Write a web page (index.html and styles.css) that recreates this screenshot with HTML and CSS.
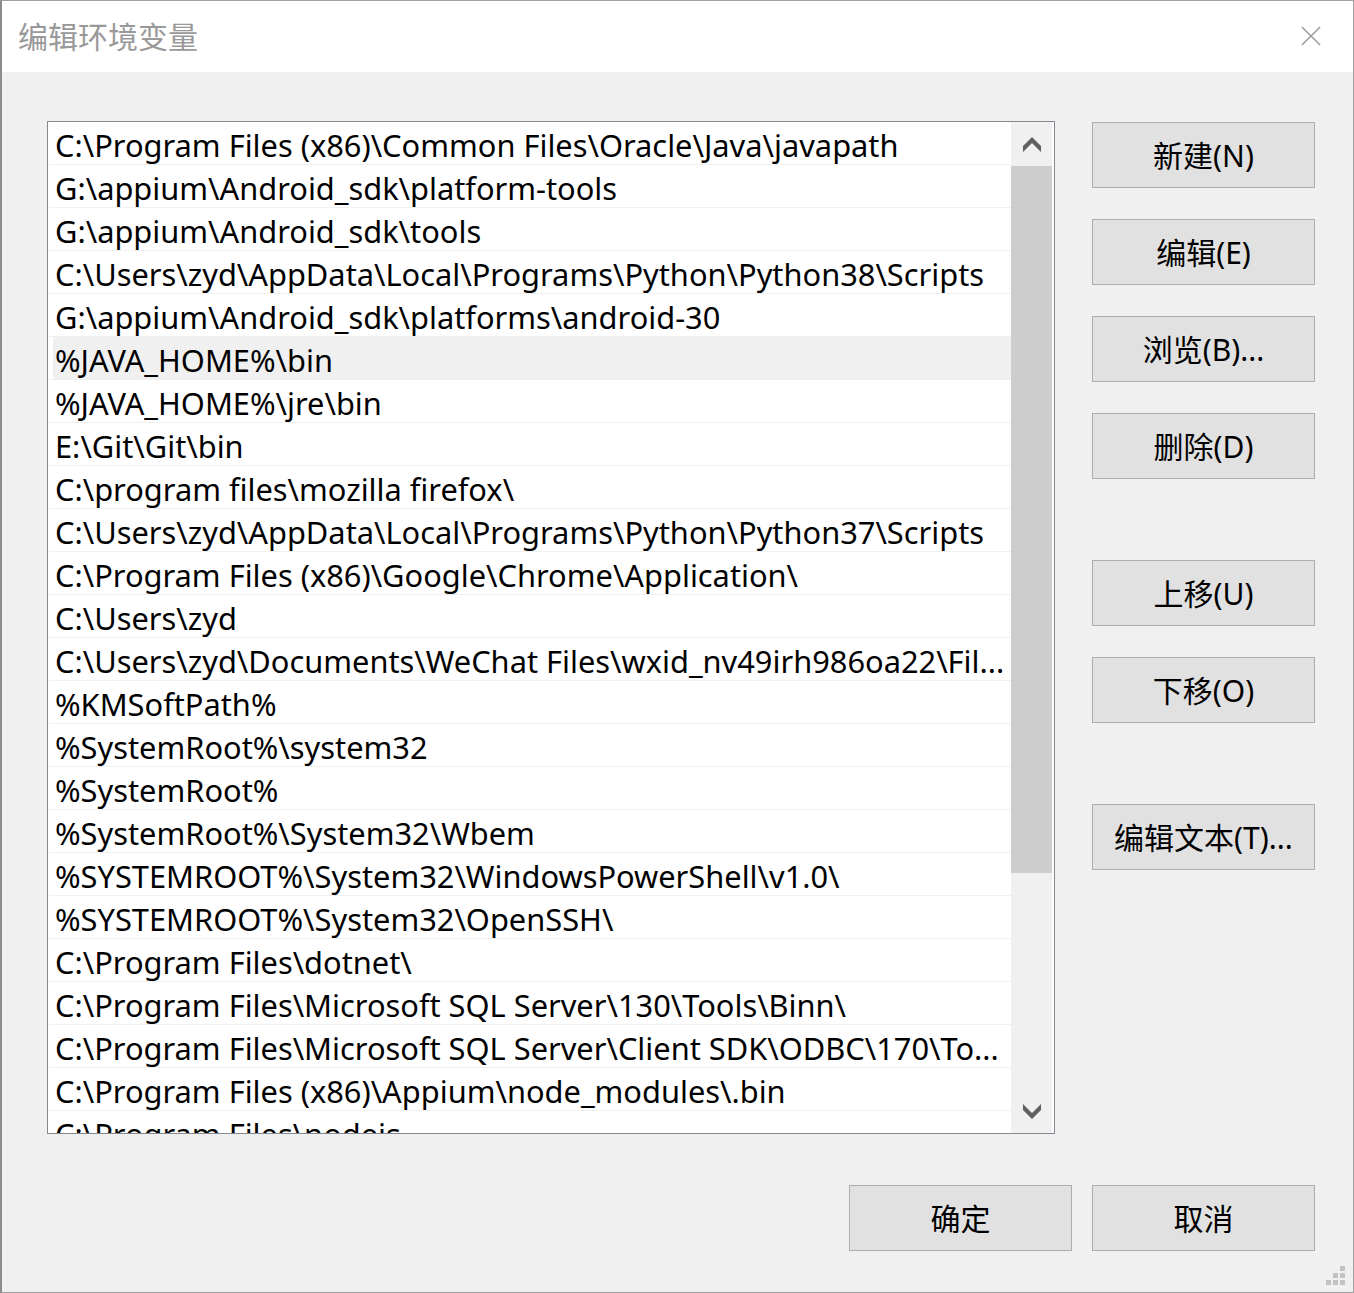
FILE: index.html
```html
<!doctype html>
<html lang="zh-CN">
<head>
	<meta charset="UTF-8">
	<title>编辑环境变量</title>
	<link rel="stylesheet" href="styles.css">
</head>
<body>
	<div class="win">
		<div class="titlebar">
			<span class="title">编辑环境变量</span>
			<svg class="close" width="22" height="22" viewBox="0 0 22 22">
				<path d="M1 1L21 21M21 1L1 21" stroke="#999" stroke-width="1.6" fill="none"/>
			</svg>
		</div>
		<div class="body">
			<div class="main">
				<div class="listbox">
					<div class="rows">
						<div class="row"><span>C:\Program Files (x86)\Common Files\Oracle\Java\javapath</span></div>
						<div class="row"><span>G:\appium\Android_sdk\platform-tools</span></div>
						<div class="row"><span>G:\appium\Android_sdk\tools</span></div>
						<div class="row"><span>C:\Users\zyd\AppData\Local\Programs\Python\Python38\Scripts</span></div>
						<div class="row"><span>G:\appium\Android_sdk\platforms\android-30</span></div>
						<div class="row sel"><span>%JAVA_HOME%\bin</span></div>
						<div class="row"><span>%JAVA_HOME%\jre\bin</span></div>
						<div class="row"><span>E:\Git\Git\bin</span></div>
						<div class="row"><span>C:\program files\mozilla firefox\</span></div>
						<div class="row"><span>C:\Users\zyd\AppData\Local\Programs\Python\Python37\Scripts</span></div>
						<div class="row"><span>C:\Program Files (x86)\Google\Chrome\Application\</span></div>
						<div class="row"><span>C:\Users\zyd</span></div>
						<div class="row"><span>C:\Users\zyd\Documents\WeChat Files\wxid_nv49irh986oa22\Fil...</span></div>
						<div class="row"><span>%KMSoftPath%</span></div>
						<div class="row"><span>%SystemRoot%\system32</span></div>
						<div class="row"><span>%SystemRoot%</span></div>
						<div class="row"><span>%SystemRoot%\System32\Wbem</span></div>
						<div class="row"><span>%SYSTEMROOT%\System32\WindowsPowerShell\v1.0\</span></div>
						<div class="row"><span>%SYSTEMROOT%\System32\OpenSSH\</span></div>
						<div class="row"><span>C:\Program Files\dotnet\</span></div>
						<div class="row"><span>C:\Program Files\Microsoft SQL Server\130\Tools\Binn\</span></div>
						<div class="row"><span>C:\Program Files\Microsoft SQL Server\Client SDK\ODBC\170\To...</span></div>
						<div class="row"><span>C:\Program Files (x86)\Appium\node_modules\.bin</span></div>
						<div class="row"><span>C:\Program Files\nodejs</span></div>
					</div>
					<div class="vscroll">
						<div class="arrow">
							<svg width="18" height="17" viewBox="0 0 18 17"><path d="M0 10L9 1L18 10V16L9 7L0 16Z" fill="#606060"/></svg>
						</div>
						<div class="track"><div class="thumb"></div></div>
						<div class="arrow">
							<svg width="18" height="17" viewBox="0 0 18 17"><path d="M0 1L9 10L18 1V7L9 16L0 7Z" fill="#606060"/></svg>
						</div>
					</div>
				</div>
				<div class="side">
					<div class="btn">新建(N)</div>
					<div class="btn">编辑(E)</div>
					<div class="btn">浏览(B)...</div>
					<div class="btn">删除(D)</div>
					<div class="btn gap">上移(U)</div>
					<div class="btn">下移(O)</div>
					<div class="btn gap">编辑文本(T)...</div>
				</div>
			</div>
			<div class="footer">
				<div class="btn">确定</div>
				<div class="btn">取消</div>
			</div>
			<div class="grip">
				<i style="grid-area:1/3"></i>
				<i style="grid-area:2/2"></i><i style="grid-area:2/3"></i>
				<i style="grid-area:3/1"></i><i style="grid-area:3/2"></i><i style="grid-area:3/3"></i>
			</div>
		</div>
	</div>
</body>
</html>
```

FILE: styles.css
```css
*{padding:0;margin:0;box-sizing:border-box;}
html,body{width:100%;height:100%;}
body{
	font-family:"Noto Sans","Noto Sans CJK SC",sans-serif;
	font-size:30px;
	color:#000;
	background:#f0f0f0;
}
.win{
	width:1354px;height:1293px;
	display:flex;flex-direction:column;
	border:1px solid #a0a0a0;
	border-left:2px solid #8c8c8c;
	background:#f0f0f0;
}
.titlebar{
	height:71px;
	background:#fff;
	display:flex;align-items:center;justify-content:space-between;
	padding:0 32px 4px 16px;
	flex-shrink:0;
}
.title{color:#999;font-size:30px;line-height:1;font-family:"Noto Sans CJK SC",sans-serif;}
.close{width:20px;height:20px;margin-top:3px;}

.body{
	flex:1;
	position:relative;
	padding:49px 38px 0 45px;
	background:#f0f0f0;
}
.main{display:flex;gap:37px;}

/*列表*/
.listbox{
	width:1008px;height:1013px;
	border:1px solid #828790;
	background:#fff;
	display:flex;
	padding-right:2px;
	overflow:hidden;
}
.rows{flex:1;overflow:hidden;}
.row{
	height:43px;
	border-bottom:1px solid #f0f0f0;
	margin-left:1px;
	padding-left:4px;
	white-space:nowrap;overflow:hidden;
	font-size:30.8px;
}
.row span{
	display:block;
	height:42px;line-height:38px;
	padding:4px 0 0 2px;
}
.row.sel span{background:#f0f0f0;}

.vscroll{
	width:41px;
	background:#f0f0f0;
	display:flex;flex-direction:column;
}
.arrow{height:44px;display:flex;align-items:center;justify-content:center;}
.track{flex:1;}
.thumb{height:707px;background:#cdcdcd;}

/*按钮*/
.side{display:flex;flex-direction:column;gap:31px;width:223px;margin-top:1px;}
.side .gap{margin-top:50px;}
.btn{
	width:223px;height:66px;
	border:1px solid #adadad;
	background:#e1e1e1;
	display:flex;align-items:center;justify-content:center;
	padding-bottom:3px;
	font-family:"Noto Sans","Noto Sans CJK SC",sans-serif;
	font-size:30px;
}
.footer{
	display:flex;justify-content:flex-end;gap:20px;
	margin-top:51px;
}

.grip{
	position:absolute;right:8px;bottom:7px;
	display:grid;grid-template-columns:repeat(3,5px);grid-template-rows:repeat(3,5px);gap:2px;
}
.grip i{display:block;background:#c2c2c2;}
```
